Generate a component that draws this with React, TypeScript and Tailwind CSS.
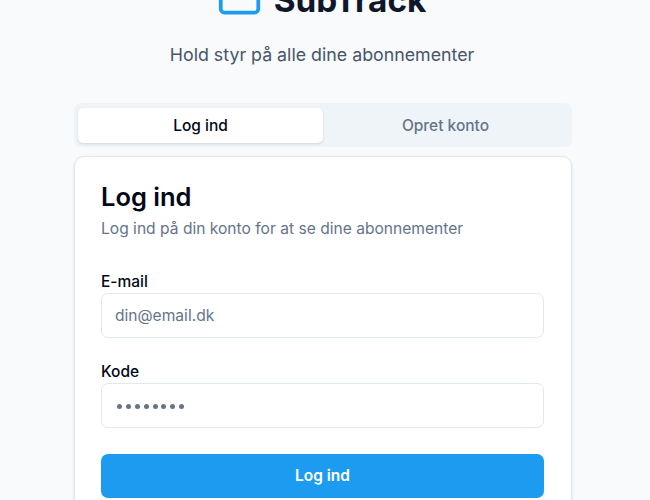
import { CreditCard } from "lucide-react"

function Field({ label, value, dots }: { label: string; value: string; dots?: boolean }) {
    return (
        <div className="flex flex-col gap-[1px]">
            <label className="text-[15.5px] leading-[20px] font-medium text-[#020817]">{label}</label>
            <div className="flex h-[45px] items-center rounded-[7px] border border-[#e2e8f0] bg-white px-[13px] pt-[1px] text-[15.6px] text-[#64748b]">
                {dots ? (
                    <div className="flex gap-[3.9px] pl-[2px]">
                        {Array.from({ length: 8 }).map((_, i) => (
                            <span key={i} className="h-[5px] w-[5px] rounded-full bg-[#64748b]" />
                        ))}
                    </div>
                ) : (
                    value
                )}
            </div>
        </div>
    )
}

export default function App() {
    return (
        <div className="h-[500px] overflow-hidden bg-[#f8fafc] font-['Inter',sans-serif]">
            <div className="ml-[74px] -mt-[23px] flex w-[498px] flex-col">
                {/* Logo */}
                <div className="flex items-center justify-center gap-[12px] pr-[3px]">
                    <CreditCard size={45} strokeWidth={2} className="text-[#1d9bf0]" />
                    <span className="text-[33.3px] leading-[40px] font-bold text-[#0f172a]">SubTrack</span>
                </div>
                <p className="mt-[19px] pr-[2px] text-center text-[17.8px] leading-[28px] text-[#475569]">
                    Hold styr på alle dine abonnementer
                </p>

                {/* Tabs */}
                <div className="mt-[34px] grid h-[44px] grid-cols-2 rounded-[7px] bg-[#eff4f9] px-[4px] pt-[5px] pb-[4px]">
                    <button className="rounded-[5px] bg-white text-[15.5px] font-medium text-[#020817] shadow-sm">Log ind</button>
                    <button className="rounded-[5px] text-[15.5px] font-medium text-[#64748b]">Opret konto</button>
                </div>

                {/* Card */}
                <div className="mt-[9px] rounded-[10px] border border-[#e2e8f0] bg-white pl-[26px] pr-[27px] pt-[25px] pb-[40px] shadow-sm">
                    <h2 className="text-[25.5px] leading-[30px] font-semibold text-[#020817]">Log ind</h2>
                    <p className="mt-[6px] text-[15.6px] leading-[22px] text-[#64748b]">
                        Log ind på din konto for at se dine abonnementer
                    </p>
                    <div className="mt-[32px] flex flex-col gap-[24px]">
                        <Field label="E-mail" value="din@email.dk" />
                        <Field label="Kode" value="" dots />
                    </div>
                    <button className="mt-[26px] h-[44px] w-full rounded-[7px] bg-[#1d9bf0] text-[15.5px] font-semibold text-white">
                        Log ind
                    </button>
                </div>
            </div>
        </div>
    )
}
